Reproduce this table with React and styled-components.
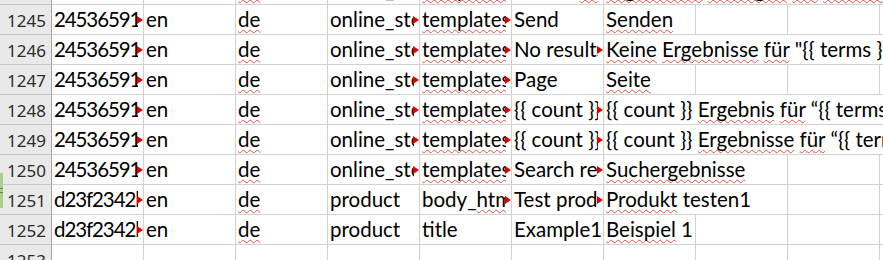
import React from "react";
import styled, { createGlobalStyle } from "styled-components";

const GlobalStyle = createGlobalStyle`
  html, body {
    margin: 0;
    padding: 0;
    background: #fff;
  }
  body {
    overflow: hidden;
  }
`;

const Sheet = styled.div`
  width: 883px;
  height: 260px;
  overflow: hidden;
  background: #fff;
`;

const Grid = styled.div`
  display: grid;
  grid-template-columns: 52px repeat(10, 92px);
  grid-auto-rows: 30px;
  margin-top: -25px;
`;

const greenBar = {
  end: "linear-gradient(#a9cf8f, #a9cf8f) left bottom / 3px 11px no-repeat,",
  start:
    "linear-gradient(#5d8a47, #5d8a47) left 3px / 3px 1px no-repeat, linear-gradient(#5d8a47, #5d8a47) left 7px / 3px 1px no-repeat, linear-gradient(#a9cf8f, #a9cf8f) left top / 3px 23px no-repeat,",
};

const RowHead = styled.div`
  box-sizing: border-box;
  display: flex;
  justify-content: flex-end;
  padding: 1px 5px 0 0;
  border-right: 1px solid #a6a6a6;
  border-bottom: 1px solid #c6c6c6;
  background: ${(p) => greenBar[p.$mark] || ""} #e9e9e9;
  color: #2b2b2b;
  font-family: "Noto Sans", "DejaVu Sans", sans-serif;
  font-size: 17px;
  line-height: 29px;
`;

const Cell = styled.div`
  position: relative;
  box-sizing: border-box;
  grid-column: span ${(p) => p.$span || 1};
  padding-left: 2px;
  border-right: 1px solid #d2d2d2;
  border-bottom: 1px solid #d2d2d2;
  overflow: hidden;
  color: #000;
  font-family: Lato, "Liberation Sans", sans-serif;
  font-size: 20.5px;
  line-height: 29px;
  letter-spacing: ${(p) => (p.$tight ? "-1.1px" : "normal")};
`;

const Value = styled.div`
  overflow: hidden;
  white-space: nowrap;
  margin-right: ${(p) => (p.$clip ? 5 : 0)}px;
`;

const Clip = styled.span`
  position: absolute;
  top: 11px;
  right: 0;
  width: 6px;
  height: 8px;
  background: #dc0000;
  clip-path: polygon(0 0, 100% 50%, 0 100%);
`;

const Err = styled.span`
  text-decoration: underline wavy #e2504a;
  text-decoration-thickness: 1px;
  text-underline-offset: 2px;
  text-decoration-skip-ink: none;
`;

// "~word~" marks a word flagged by the spell checker
const Text = ({ value }) =>
  value.split("~").map((part, i) =>
    i % 2 ? <Err key={i}>{part}</Err> : <React.Fragment key={i}>{part}</React.Fragment>
  );

const idA = "24536591c8a0";
const idB = "d23f2342b7e1";

const store = [
  { v: idA, clip: true, tight: true },
  { v: "en" },
  { v: "~de~" },
  { v: "online_store", clip: true },
  { v: "~templates~", clip: true },
];

const product = (field, clip) => [
  { v: idB, clip: true, tight: true },
  { v: "en" },
  { v: "~de~" },
  { v: "product" },
  { v: field, clip },
];

const rows = [
  {
    n: 1244,
    cells: [
      ...store,
      { v: "Search ~results~", clip: true },
      { v: "~Ergebnisse~ ~anzeigen~ ~für~ ~Suchbegriffe~ ~eingeben~", span: 4 },
    ],
  },
  { n: 1245, cells: [...store, { v: "Send" }, { v: "~Senden~" }] },
  {
    n: 1246,
    cells: [
      ...store,
      { v: "No results for", clip: true },
      { v: '~Keine~ ~Ergebnisse~ ~für~ "{{ terms }}"', span: 4 },
    ],
  },
  { n: 1247, cells: [...store, { v: "Page" }, { v: "~Seite~" }] },
  {
    n: 1248,
    cells: [
      ...store,
      { v: "{{ count }} result", clip: true },
      { v: "{{ count }} ~Ergebnis~ ~für~ “{{ terms }}”", span: 4 },
    ],
  },
  {
    n: 1249,
    cells: [
      ...store,
      { v: "{{ count }} results", clip: true },
      { v: "{{ count }} ~Ergebnisse~ ~für~ “{{ terms }}”", span: 4 },
    ],
  },
  {
    n: 1250,
    mark: "end",
    cells: [
      ...store,
      { v: "Search results", clip: true },
      { v: "~Suchergebnisse~", span: 2 },
    ],
  },
  {
    n: 1251,
    mark: "start",
    cells: [
      ...product("body_~html~", true),
      { v: "Test product", clip: true },
      { v: "~Produkt~ testen1", span: 2 },
    ],
  },
  {
    n: 1252,
    cells: [...product("title"), { v: "Example1" }, { v: "~Beispiel~ 1" }],
  },
  { n: 1253, cells: [] },
];

const COLS = 10;

export default function App() {
  return (
    <Sheet>
      <GlobalStyle />
      <Grid>
        {rows.map((row) => {
          const used = row.cells.reduce((s, c) => s + (c.span || 1), 0);
          const blanks = Array.from({ length: COLS - used });
          return (
            <React.Fragment key={row.n}>
              <RowHead $mark={row.mark}>{row.n}</RowHead>
              {row.cells.map((c, i) => (
                <Cell key={i} $span={c.span} $tight={c.tight}>
                  <Value $clip={c.clip}>
                    <Text value={c.v} />
                  </Value>
                  {c.clip && <Clip />}
                </Cell>
              ))}
              {blanks.map((_, i) => (
                <Cell key={"b" + i} />
              ))}
            </React.Fragment>
          );
        })}
      </Grid>
    </Sheet>
  );
}
